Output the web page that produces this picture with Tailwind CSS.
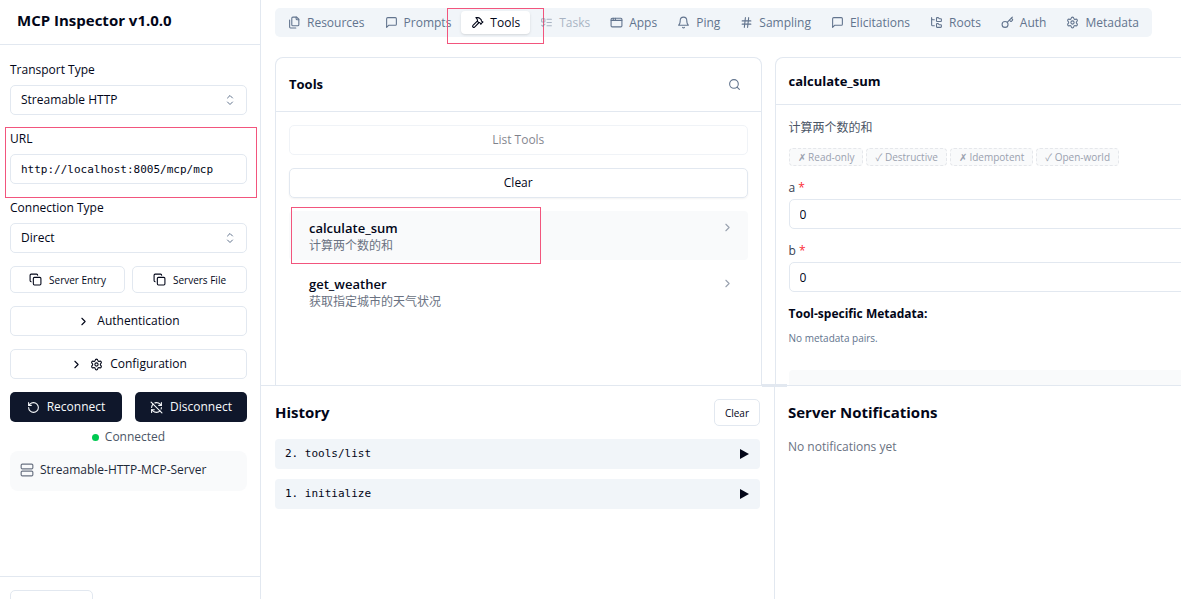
<!DOCTYPE html>
<html lang="en">
<head>
  <meta charset="UTF-8">
  <meta name="viewport" content="width=device-width, initial-scale=1.0">
  <title>MCP Inspector</title>
  <script src="https://cdn.jsdelivr.net/npm/@tailwindcss/browser@4"></script>
  <style>
    body {
      font-family: 'Open Sans', 'Noto Sans CJK SC', sans-serif;
    }
    .mono {
      font-family: 'DejaVu Sans Mono', monospace;
    }
    svg {
      fill: none;
      stroke: currentColor;
      stroke-width: 2;
      stroke-linecap: round;
      stroke-linejoin: round;
      flex-shrink: 0;
    }
  </style>
</head>
<body class="bg-white text-slate-950 text-[12px] leading-4">
  <!-- icons -->
  <svg class="hidden">
    <symbol id="files" viewBox="0 0 24 24"><path d="M20 7h-3a2 2 0 0 1-2-2V2"/><path d="M9 18a2 2 0 0 1-2-2V4a2 2 0 0 1 2-2h7l4 4v10a2 2 0 0 1-2 2Z"/><path d="M3 7.6v12.8A1.6 1.6 0 0 0 4.6 22h9.8"/></symbol>
    <symbol id="message" viewBox="0 0 24 24"><path d="M21 15a2 2 0 0 1-2 2H7l-4 4V5a2 2 0 0 1 2-2h14a2 2 0 0 1 2 2z"/></symbol>
    <symbol id="hammer" viewBox="0 0 24 24"><path d="m15 12-8.373 8.373a1 1 0 1 1-3-3L12 9"/><path d="m18 15 4-4"/><path d="m21.5 11.5-1.914-1.914A2 2 0 0 1 19 8.172V7l-2.26-2.26a6 6 0 0 0-4.202-1.756L9 2.96l.92.82A6.18 6.18 0 0 1 12 8.4V10l2 2h1.172a2 2 0 0 1 1.414.586L18.5 14.5"/></symbol>
    <symbol id="todo" viewBox="0 0 24 24"><rect x="3" y="5" width="6" height="6" rx="1"/><path d="m3 17 2 2 4-4"/><path d="M13 6h8"/><path d="M13 12h8"/><path d="M13 18h8"/></symbol>
    <symbol id="window" viewBox="0 0 24 24"><rect x="2" y="4" width="20" height="16" rx="2"/><path d="M10 4v4"/><path d="M2 8h20"/><path d="M6 4v4"/></symbol>
    <symbol id="bell" viewBox="0 0 24 24"><path d="M6 8a6 6 0 0 1 12 0c0 7 3 9 3 9H3s3-2 3-9"/><path d="M10.3 21a1.94 1.94 0 0 0 3.4 0"/></symbol>
    <symbol id="hash" viewBox="0 0 24 24"><path d="M4 9h16"/><path d="M4 15h16"/><path d="M10 3 8 21"/><path d="m16 3-2 18"/></symbol>
    <symbol id="tree" viewBox="0 0 24 24"><path d="M20 10a1 1 0 0 0 1-1V6a1 1 0 0 0-1-1h-2.5a1 1 0 0 1-.8-.4l-.9-1.2A1 1 0 0 0 15 3h-2a1 1 0 0 0-1 1v5a1 1 0 0 0 1 1Z"/><path d="M20 21a1 1 0 0 0 1-1v-3a1 1 0 0 0-1-1h-2.9a1 1 0 0 1-.88-.55l-.42-.85a1 1 0 0 0-.92-.6H13a1 1 0 0 0-1 1v5a1 1 0 0 0 1 1Z"/><path d="M3 5a2 2 0 0 0 2 2h3"/><path d="M3 3v13a2 2 0 0 0 2 2h3"/></symbol>
    <symbol id="key" viewBox="0 0 24 24"><path d="m15.5 7.5 2.3 2.3a1 1 0 0 0 1.4 0l2.1-2.1a1 1 0 0 0 0-1.4L19 4"/><path d="m21 2-9.6 9.6"/><circle cx="7.5" cy="15.5" r="5.5"/></symbol>
    <symbol id="gear" viewBox="0 0 24 24"><path d="M9.671 4.136a2.34 2.34 0 0 1 4.659 0 2.34 2.34 0 0 0 3.319 1.915 2.34 2.34 0 0 1 2.33 4.033 2.34 2.34 0 0 0 0 3.831 2.34 2.34 0 0 1-2.33 4.033 2.34 2.34 0 0 0-3.319 1.915 2.34 2.34 0 0 1-4.659 0 2.34 2.34 0 0 0-3.32-1.915 2.34 2.34 0 0 1-2.33-4.033 2.34 2.34 0 0 0 0-3.831A2.34 2.34 0 0 1 6.35 6.051a2.34 2.34 0 0 0 3.319-1.915"/><circle cx="12" cy="12" r="3"/></symbol>
    <symbol id="copy" viewBox="0 0 24 24"><rect x="8" y="8" width="14" height="14" rx="2"/><path d="M4 16c-1.1 0-2-.9-2-2V4c0-1.1.9-2 2-2h10c1.1 0 2 .9 2 2"/></symbol>
    <symbol id="chevron" viewBox="0 0 24 24"><path d="m9 18 6-6-6-6"/></symbol>
    <symbol id="updown" viewBox="0 0 12 12"><path stroke-width="1" d="M3.5 4 6 1.5 8.5 4"/><path stroke-width="1" d="M3.5 8 6 10.5 8.5 8"/></symbol>
    <symbol id="rotate" viewBox="0 0 24 24"><path d="M3 12a9 9 0 1 0 9-9 9.75 9.75 0 0 0-6.74 2.74L3 8"/><path d="M3 3v5h5"/></symbol>
    <symbol id="refresh-off" viewBox="0 0 24 24"><path d="M21 8L18.74 5.74A9.75 9.75 0 0 0 12 3C11 3 10.03 3.16 9.13 3.47"/><path d="M8 16H3v5"/><path d="M3 12C3 9.51 4 7.26 5.64 5.64"/><path d="m3 16 2.26 2.26A9.75 9.75 0 0 0 12 21c2.49 0 4.74-1 6.36-2.64"/><path d="M21 12c0 1-.16 1.97-.47 2.87"/><path d="M21 3v5h-5"/><path d="M22 22 2 2"/></symbol>
    <symbol id="server" viewBox="0 0 24 24"><rect x="2" y="2" width="20" height="8" rx="2"/><rect x="2" y="14" width="20" height="8" rx="2"/></symbol>
    <symbol id="search" viewBox="0 0 24 24"><circle cx="11" cy="11" r="8"/><path d="m21 21-4.3-4.3"/></symbol>
    <symbol id="play" viewBox="0 0 10 10"><path fill="currentColor" stroke="none" d="M0 0v10l9-5z"/></symbol>
  </svg>

  <div class="flex h-screen overflow-hidden">
    <!-- sidebar -->
    <aside class="flex w-[261px] shrink-0 flex-col border-r border-slate-200">
      <h1 class="border-b border-slate-200 px-[17px] pt-2 pb-3 text-[15px] leading-6 font-bold">MCP Inspector v1.0.0</h1>
      <div class="flex flex-1 flex-col gap-[13px] pt-[14px] pr-[13px] pl-[10px]">
        <div>
          <label for="transport" class="mb-[6px] block pt-px leading-[19px]">Transport Type</label>
          <div class="relative">
            <select id="transport" class="h-[30px] w-full appearance-none rounded-[5px] border border-slate-200 px-[10px]">
              <option>Streamable HTTP</option>
            </select>
            <svg class="pointer-events-none absolute top-[9px] right-[11px] size-3 text-slate-500"><use href="#updown"/></svg>
          </div>
        </div>
        <div class="relative">
          <label for="url" class="mb-[6px] block pt-px leading-[19px]">URL</label>
          <input id="url" type="text" value="http://localhost:8005/mcp/mcp" class="mono h-[30px] w-full rounded-[5px] border border-slate-200 px-[10px] text-[11px]">
          <div class="pointer-events-none absolute -top-[1px] -right-[10px] -bottom-[14px] -left-[5px] border border-[#f2557d]"></div>
        </div>
        <div>
          <label for="connection" class="mb-[6px] block pt-px leading-[19px]">Connection Type</label>
          <div class="relative">
            <select id="connection" class="h-[30px] w-full appearance-none rounded-[5px] border border-slate-200 px-[10px]">
              <option>Direct</option>
            </select>
            <svg class="pointer-events-none absolute top-[9px] right-[11px] size-3 text-slate-500"><use href="#updown"/></svg>
          </div>
        </div>
        <div class="grid grid-cols-2 gap-[7px]">
          <button class="flex h-[27px] items-center justify-center gap-[7px] rounded-[5px] border border-slate-200 text-[10px] font-medium"><svg class="size-[13px]"><use href="#copy"/></svg>Server Entry</button>
          <button class="flex h-[27px] items-center justify-center gap-[7px] rounded-[5px] border border-slate-200 text-[10px] font-medium"><svg class="size-[13px]"><use href="#copy"/></svg>Servers File</button>
        </div>
        <button class="flex h-[30px] items-center justify-center gap-[7px] rounded-[5px] border border-slate-200"><svg class="size-[13px]"><use href="#chevron"/></svg>Authentication</button>
        <button class="flex h-[30px] items-center justify-center gap-[7px] rounded-[5px] border border-slate-200"><svg class="size-[13px]"><use href="#chevron"/></svg><svg class="size-[13px]"><use href="#gear"/></svg>Configuration</button>
        <div>
          <div class="grid grid-cols-2 gap-[13px]">
            <button class="flex h-[30px] items-center justify-center gap-[7px] rounded-[5px] bg-slate-900 text-slate-50"><svg class="size-[13px]"><use href="#rotate"/></svg>Reconnect</button>
            <button class="flex h-[30px] items-center justify-center gap-[7px] rounded-[5px] bg-slate-900 text-slate-50"><svg class="size-[13px]"><use href="#refresh-off"/></svg>Disconnect</button>
          </div>
          <div class="mt-[6px] mb-[5px] flex items-center justify-center gap-[6px] leading-[18px] text-gray-600"><span class="size-[7px] rounded-full bg-green-500"></span>Connected</div>
          <div class="flex h-10 items-start gap-[6px] rounded-lg bg-gray-50 p-[10px] leading-[18px] text-gray-800"><svg class="mt-[2px] size-[14px] text-gray-500"><use href="#server"/></svg>Streamable-HTTP-MCP-Server</div>
        </div>
      </div>
      <div class="h-[23px] border-t border-slate-200 px-[10px] pt-[13px]">
        <select aria-label="Theme" class="h-[30px] w-[83px] appearance-none rounded-[5px] border border-slate-200"></select>
      </div>
    </aside>

    <main class="flex min-w-0 flex-1 flex-col overflow-hidden">
      <div class="flex min-h-0 flex-1 flex-col overflow-hidden pt-2 pl-[14px]">
        <nav class="mb-5 flex h-[29px] w-fit shrink-0 items-center rounded-[5px] bg-slate-100 px-[3px] text-slate-500">
          <button class="flex h-[23px] items-center gap-[6px] px-[10px]"><svg class="size-[13px]"><use href="#files"/></svg>Resources</button>
          <button class="flex h-[23px] items-center gap-[6px] px-[10px]"><svg class="size-[13px]"><use href="#message"/></svg>Prompts</button>
          <button class="relative flex h-[23px] items-center gap-[6px] rounded bg-white px-[10px] text-slate-950 shadow-sm"><svg class="size-[13px]"><use href="#hammer"/></svg>Tools
            <span class="pointer-events-none absolute -inset-x-[14px] -top-[3px] -bottom-[10px] border border-[#f2557d]"></span>
          </button>
          <button disabled class="flex h-[23px] items-center gap-[6px] px-[10px] opacity-50"><svg class="size-[13px]"><use href="#todo"/></svg>Tasks</button>
          <button class="flex h-[23px] items-center gap-[6px] px-[10px]"><svg class="size-[13px]"><use href="#window"/></svg>Apps</button>
          <button class="flex h-[23px] items-center gap-[6px] px-[10px]"><svg class="size-[13px]"><use href="#bell"/></svg>Ping</button>
          <button class="flex h-[23px] items-center gap-[6px] px-[10px]"><svg class="size-[13px]"><use href="#hash"/></svg>Sampling</button>
          <button class="flex h-[23px] items-center gap-[6px] px-[10px]"><svg class="size-[13px]"><use href="#message"/></svg>Elicitations</button>
          <button class="flex h-[23px] items-center gap-[6px] px-[10px]"><svg class="size-[13px]"><use href="#tree"/></svg>Roots</button>
          <button class="flex h-[23px] items-center gap-[6px] px-[10px]"><svg class="size-[13px]"><use href="#key"/></svg>Auth</button>
          <button class="flex h-[23px] items-center gap-[6px] px-[10px]"><svg class="size-[13px]"><use href="#gear"/></svg>Metadata</button>
        </nav>

        <div class="-mr-20 grid min-h-0 flex-1 grid-cols-2 gap-[13px]">
          <section class="rounded-t-lg border border-b-0 border-slate-200">
            <div class="flex items-center justify-between border-b border-slate-200 py-[17px] pr-5 pl-[13px]">
              <h3 class="text-[13px] leading-[19px] font-bold">Tools</h3>
              <button aria-label="Search" class="text-slate-500"><svg class="size-[13px]"><use href="#search"/></svg></button>
            </div>
            <div class="flex flex-col gap-[13px] p-[13px]">
              <button disabled class="h-[30px] rounded-[5px] border border-slate-200 opacity-50">List Tools</button>
              <button class="h-[30px] rounded-[5px] border border-slate-200 shadow-xs">Clear</button>
              <div class="flex flex-col gap-[7px]">
                <button class="relative flex items-start rounded bg-gray-50 px-5 pt-2 pb-[5px] text-left">
                  <span class="flex-1">
                    <span class="block text-[13px] leading-[18px] font-semibold">calculate_sum</span>
                    <span class="block leading-[18px] text-gray-500">计算两个数的和</span>
                  </span>
                  <svg class="mt-[2px] -mr-[6px] size-[13px] text-gray-400"><use href="#chevron"/></svg>
                  <span class="pointer-events-none absolute -top-1 -bottom-1 left-[2px] w-[250px] border border-[#f2557d]"></span>
                </button>
                <button class="flex items-start rounded px-5 pt-2 pb-[5px] text-left">
                  <span class="flex-1">
                    <span class="block text-[13px] leading-[18px] font-semibold">get_weather</span>
                    <span class="block leading-[18px] text-gray-500">获取指定城市的天气状况</span>
                  </span>
                  <svg class="mt-[2px] -mr-[6px] size-[13px] text-gray-400"><use href="#chevron"/></svg>
                </button>
              </div>
            </div>
          </section>

          <section class="rounded-t-lg border border-b-0 border-slate-200">
            <h3 class="border-b border-slate-200 px-[13px] py-[14px] text-[13px] leading-[18px] font-bold">calculate_sum</h3>
            <div class="flex flex-col p-[13px]">
              <p class="mb-[10px] leading-5 text-gray-600">计算两个数的和</p>
              <div class="mb-[14px] flex gap-[3px] text-[10px] leading-4 text-gray-400">
                <span class="rounded border border-dashed border-gray-200 bg-gray-50 px-2">✗ Read-only</span>
                <span class="rounded border border-dashed border-gray-200 bg-gray-50 px-2">✓ Destructive</span>
                <span class="rounded border border-dashed border-gray-200 bg-gray-50 px-2">✗ Idempotent</span>
                <span class="rounded border border-dashed border-gray-200 bg-gray-50 px-2">✓ Open-world</span>
              </div>
              <label for="a" class="mb-[3px] text-gray-700">a <span class="text-red-500">*</span></label>
              <input id="a" type="text" value="0" class="mb-[14px] h-[30px] rounded-[5px] border border-slate-200 px-[10px]">
              <label for="b" class="mb-[3px] text-gray-700">b <span class="text-red-500">*</span></label>
              <input id="b" type="text" value="0" class="mb-[14px] h-[30px] rounded-[5px] border border-slate-200 px-[10px]">
              <h4 class="mb-2 font-bold">Tool-specific Metadata:</h4>
              <p class="mb-6 text-[10px] text-slate-500">No metadata pairs.</p>
              <div class="h-[50px] rounded bg-gray-50"></div>
            </div>
          </section>
        </div>
      </div>

      <!-- history / notifications -->
      <div class="relative flex h-[214px] shrink-0 border-t border-slate-200 bg-white">
        <div class="absolute -top-[2px] left-[501px] h-[3px] w-[25px] bg-slate-200"></div>
        <section class="w-[514px] shrink-0 border-r border-slate-200 px-[14px] pt-[13px]">
          <div class="mb-[13px] flex items-center justify-between">
            <h2 class="text-[15px] leading-[27px] font-bold">History</h2>
            <button class="h-[27px] rounded-[5px] border border-slate-200 px-[10px] text-[10px] font-medium">Clear</button>
          </div>
          <ul class="mono flex flex-col gap-[10px] text-[11px]">
            <li><button class="flex h-[30px] w-full items-center justify-between rounded bg-slate-100 px-[10px]"><span>2. tools/list</span><svg class="size-[10px]"><use href="#play"/></svg></button></li>
            <li><button class="flex h-[30px] w-full items-center justify-between rounded bg-slate-100 px-[10px]"><span>1. initialize</span><svg class="size-[10px]"><use href="#play"/></svg></button></li>
          </ul>
        </section>
        <section class="flex-1 px-[13px] pt-[13px]">
          <h2 class="mb-[13px] text-[15px] leading-[27px] font-bold">Server Notifications</h2>
          <p class="text-gray-500">No notifications yet</p>
        </section>
      </div>
    </main>
  </div>
</body>
</html>
